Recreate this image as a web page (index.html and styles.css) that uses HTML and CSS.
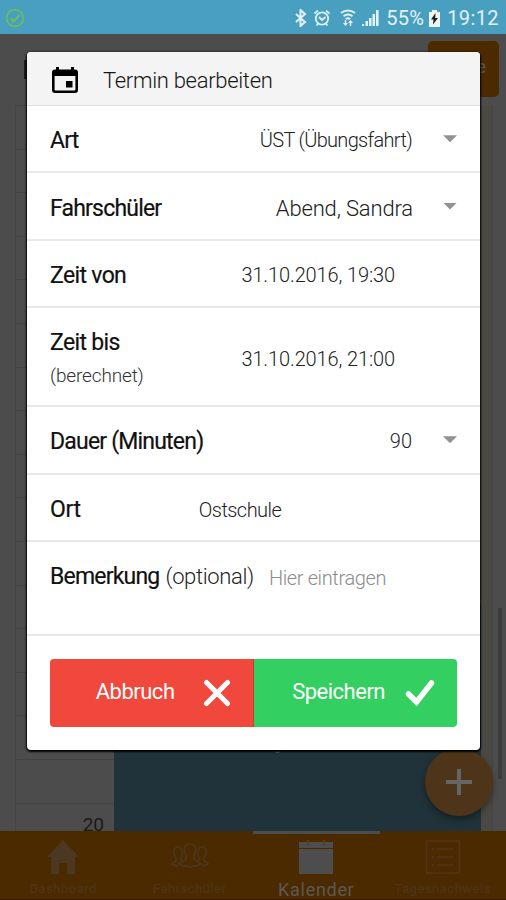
FILE: index.html
```
<!DOCTYPE html>
<html lang="de">
<head>
<meta charset="utf-8">
<title>Termin bearbeiten</title>
<link rel="stylesheet" href="styles.css">
</head>
<body>
<div class="screen">
  <header class="status">
    <svg class="status-ok" width="20" height="20" viewBox="0 0 20 20" fill="none" stroke="#6dbb68" stroke-width="1.7"><circle cx="10" cy="10" r="8.4"/><path d="M5.4 10l3.3 3.3 6-6.4" stroke-width="2.2"/></svg>
    <div class="status-right">
      <svg width="12" height="18" viewBox="0 0 12 18" fill="none" stroke="#e3f2f8" stroke-width="2"><path d="M1 5l9 8-4.500 4V1L10 5l-9 8"/></svg>
      <svg class="alarm" width="18" height="18" viewBox="0 0 18 18" fill="none" stroke="#e3f2f8" stroke-width="1.8"><circle cx="9" cy="9.500" r="6.200"/><path d="M1.500 4.500L5 1.600M16.500 4.500L13 1.600M3.500 16.500l1.700-2M14.500 16.500l-1.700-2M6 8l3 3 3.500-3"/></svg>
      <svg class="wifi" width="16" height="18" viewBox="0 0 16 18" fill="none" stroke="#e3f2f8" stroke-width="2"><path d="M1 4Q8-1 15 4M3.500 7.200Q8 3.800 12.500 7.200M5.700 10Q8 8.300 10.300 10"/><path d="M5.500 11v4M10.500 12v5" stroke-width="1.500"/><path d="M3 14h5l-2.500 3zM8 14h5l-2.500-3z" fill="#e3f2f8" stroke="none"/></svg>
      <svg class="signal" width="17" height="18" viewBox="0 0 17 18" fill="#e3f2f8"><path d="M0 15h2v2H0zM3.500 12H6v5H3.500zM7 9h2.500v8H7zM10.500 5h2.500v12h-2.500zM14 1h2.600v16H14z"/></svg>
      <span class="percent">55%</span>
      <svg class="battery" width="11" height="17" viewBox="0 0 11 17"><path d="M3 0h5v2h3v15H0V2h3z" fill="#eef5f2"/><path d="M6.500 3L2 9.500h2.500L4 14.500 9 8H6.200z" fill="#142024"/></svg>
      <span class="clock">19:12</span>
    </div>
  </header>
  <div class="toolbar"><div class="toolbar-title"></div><div class="toolbar-button">e</div></div>
  <main class="calendar">
    <div class="hours"><span class="hour">20</span></div>
    <div class="event">g</div>
    <div class="gutter"></div>
    <div class="track"><div class="thumb"></div></div>
  </main>
  <nav class="tabs">
    <div class="tab">
      <svg width="34" height="34" viewBox="0 0 34 34"><path d="M17 0L33 17h-4v17h-8V23h-8v11H5V17H1z" fill="#4c3720"/></svg>
      <span class="tab-label">Dashboard</span>
    </div>
    <div class="tab">
      <svg width="38" height="34" viewBox="0 0 38 34" fill="none" stroke="#4d3720" stroke-width="1.500"><path d="M15 19v-4c-3-5-2-11 4-11s7 6 4 11v4l7 5q-11 6-22 0zM10 21v-3c2-3 2-11-3-11s-5 8-2 11v3l-5 3 7 2M28 21v-3c-2-3-2-11 3-11s5 8 2 11v3l5 3-7 2"/></svg>
      <span class="tab-label">Fahrschüler</span>
    </div>
    <div class="tab tab-active">
      <svg width="34" height="34" viewBox="0 0 34 34" fill="#4d4d4d"><path d="M0 2h8v4h2V2h14v4h2V2h8v6H0zM0 9h34v25H0z"/><path d="M8 0h2v6H8zM24 0h2v6h-2z" fill="#573f23"/></svg>
      <span class="tab-label">Kalender</span>
    </div>
    <div class="tab">
      <svg width="36" height="34" viewBox="0 0 36 34" fill="none" stroke="#513619" stroke-width="1.600"><path d="M1.500 1h33v32h-33zM12 9h17M12 17h17M12 25h17M7 9h2M7 17h2M7 25h2"/></svg>
      <span class="tab-label">Tagesnachweis</span>
    </div>
  </nav>
  <div class="fab"><svg width="26" height="26" viewBox="0 0 26 26" fill="none" stroke="#656565" stroke-width="4"><path d="M13 0v26M0 13h26"/></svg></div>

  <section class="dialog">
    <div class="dialog-head">
      <svg width="26" height="27" viewBox="0 0 26 27"><path fill-rule="evenodd" d="M4 0h3v2.500h12V0h3v2.500h1q3 0 3 3V23q0 3-3 3H3q-3 0-3-3V5.500q0-3 3-3h1zM2.600 9v13.500q0 1 1 1h18.800q1 0 1-1V9z"/><path d="M14 14h6.500v6.500H14z"/></svg>
      <h1 class="dialog-title">Termin bearbeiten</h1>
    </div>
    <div class="row"><span class="label">Art</span><span class="value v-art">ÜST (Übungsfahrt)</span><i class="caret"></i></div>
    <div class="row"><span class="label">Fahrschüler</span><span class="value v-student">Abend, Sandra</span><i class="caret"></i></div>
    <div class="row"><span class="label label-time">Zeit von</span><span class="value v-time">31.10.2016, 19:30</span></div>
    <div class="row row-until"><div class="stack"><span class="label label-time">Zeit bis</span><span class="hint">(berechnet)</span></div><span class="value v-time">31.10.2016, 21:00</span></div>
    <div class="row"><span class="label">Dauer (Minuten)</span><span class="value">90</span><i class="caret"></i></div>
    <div class="row"><span class="label label-place">Ort</span><span class="value v-place">Ostschule</span></div>
    <div class="row row-note"><span class="label">Bemerkung</span><span class="optional">(optional)</span><span class="placeholder">Hier eintragen</span></div>
    <div class="actions">
      <div class="button cancel"><span class="button-text">Abbruch</span><svg width="28" height="28" viewBox="0 0 28 28" fill="none" stroke="#fff" stroke-width="5" stroke-linecap="round"><path d="M3.500 3.500l21 21M24.500 3.500l-21 21"/></svg></div>
      <div class="button save"><span class="button-text">Speichern</span><svg width="30" height="28" viewBox="0 0 30 28" fill="none" stroke="#fff" stroke-width="5.500" stroke-linecap="round"><path d="M3.500 15l8 8L26.500 4"/></svg></div>
    </div>
  </section>
</div>
</body>
</html>
```
FILE: styles.css
```
* { box-sizing: border-box; }
body { margin: 0; font-family: Roboto, "Liberation Sans", sans-serif; }
svg { display: block; flex: none; }
.screen { position: relative; width: 506px; height: 900px; display: flex; flex-direction: column; overflow: hidden; background: #4c4c4c; }

.status { height: 34px; flex: none; display: flex; align-items: center; justify-content: space-between; padding: 2px 7px 0 5px; background: #489fbf; color: #e3f2f8; }
.status-right { display: flex; align-items: center; font-size: 20px; }
.alarm { margin-left: 6px; }
.wifi { margin-left: 9px; }
.signal { margin-left: 6px; }
.percent { margin-left: 7px; letter-spacing: .3px; }
.battery { margin-left: 5px; }
.clock { margin-left: 7px; letter-spacing: .4px; }

.toolbar { height: 71px; flex: none; display: flex; align-items: flex-start; justify-content: space-between; padding: 7px 7px 0 24px; }
.toolbar-title { width: 4px; height: 19px; margin-top: 19px; background: #1c1c1c; }
.toolbar-button { width: 71px; height: 56px; border-radius: 5px; padding: 14px 13px 0 0; background: #4c2a00; color: #665341; font-size: 19px; text-align: right; }

.calendar { height: 726px; flex: none; display: flex; padding-left: 15px; }
.hours { width: 99px; border-left: 1px solid #444; display: flex; flex-direction: column; justify-content: flex-end; align-items: flex-end; padding: 0 10px 0 0; background: repeating-linear-gradient(#434343 0 1px, transparent 1px 43.6px); }
.hour { font-size: 19px; line-height: 22px; color: #1a1a1a; height: 17px; }
.event { width: 367px; padding: 628px 40px 0 0; text-align: center; color: #50605f; font-size: 18px; line-height: 20px; background: linear-gradient(#4c4c4c 0 500px, #20323a 500px); }
.gutter { width: 12px; background: #4a4943; border-right: 2px solid #464642; }
.track { flex: 1; padding: 503px 4px 0 5px; }
.thumb { height: 171px; background: #3c3c3c; }

.tabs { height: 69px; flex: none; display: grid; grid-template-columns: repeat(4, 1fr); background: #4c2a00; border-bottom: 1px solid #3e1500; }
.tab { display: flex; flex-direction: column; align-items: center; padding-top: 9px; border-top: 0 solid #4d4d4d; }
.tab-label { margin-top: 8px; font-size: 13px; line-height: 14px; color: #4e351b; letter-spacing: .5px; white-space: nowrap; }
.tab-active { border-top-width: 3px; padding-top: 6px; }
.tab-active .tab-label { margin-top: 5px; font-size: 18px; line-height: 22px; color: #5c5852; letter-spacing: .7px; }
.fab { position: absolute; left: 425px; top: 748px; width: 68px; height: 68px; border-radius: 50%; display: grid; place-items: center; background: #4e3519; box-shadow: 0 3px 6px #0006; }

.dialog { position: absolute; left: 27px; top: 52px; width: 453px; height: 698px; display: flex; flex-direction: column; border-radius: 4px; background: #fff; box-shadow: 0 1px 2px 1px #000; }
.dialog-head { height: 54px; flex: none; display: flex; align-items: center; gap: 25px; padding: 3px 25px 0; border-bottom: 1px solid #dedede; border-radius: 4px 4px 0 0; background: #f4f4f4; }
.dialog-title { margin: 0; font-size: 22px; font-weight: 350; color: #161616; letter-spacing: -.3px; }
.row { height: 67.400px; flex: none; display: flex; align-items: center; padding: 3px 23px 0; border-bottom: 2px solid #e8e8e8; white-space: nowrap; }
.row-until { height: 99px; }
.row-note { height: 94.500px; align-items: flex-start; padding-top: 21px; }
.label { padding-top: 2px; font-size: 23px; line-height: 28px; font-weight: 400; color: #111; letter-spacing: -.8px; -webkit-text-stroke: .2px #111; }
.label-time { letter-spacing: -.65px; }
.label-place { letter-spacing: -.3px; }
.row-note .label { padding-top: 0; }
.stack { display: flex; flex-direction: column; gap: 5px; }
.hint { font-size: 19px; line-height: 28px; font-weight: 300; color: #333; letter-spacing: -.15px; }
.value { margin-left: auto; font-size: 20px; line-height: 28px; font-weight: 300; color: #222; }
.caret { width: 14px; height: 7px; margin: 0 0 3px 31px; background: #929292; clip-path: polygon(0 0, 100% 0, 50% 100%); }
.v-art { letter-spacing: -.68px; }
.v-student { padding-top: 2px; font-size: 22px; margin-right: -1px; letter-spacing: -.15px; }
.v-time { margin-right: 62px; padding-top: 1px; letter-spacing: -.12px; }
.v-place { margin-left: 118px; padding-top: 3px; letter-spacing: -.55px; }
.optional { margin-left: 6px; font-size: 22px; line-height: 28px; font-weight: 300; color: #222; letter-spacing: -.35px; }
.placeholder { margin-left: 15px; padding-top: 1px; font-size: 20px; line-height: 28px; font-weight: 300; color: #8c8c8c; letter-spacing: -.37px; }

.actions { display: flex; padding: 23px 23px 0; }
.button { width: 50%; height: 68px; display: flex; align-items: center; justify-content: flex-end; color: #fff; font-size: 22px; }
.cancel { gap: 28px; padding-right: 22px; border-radius: 4px 0 0 4px; border-right: 1px solid #c83c2a; background: #f0483c; }
.save { gap: 20px; padding-right: 22px; border-radius: 0 4px 4px 0; background: #33cf60; }
.button-text { margin-top: -4px; letter-spacing: -.5px; }
```
